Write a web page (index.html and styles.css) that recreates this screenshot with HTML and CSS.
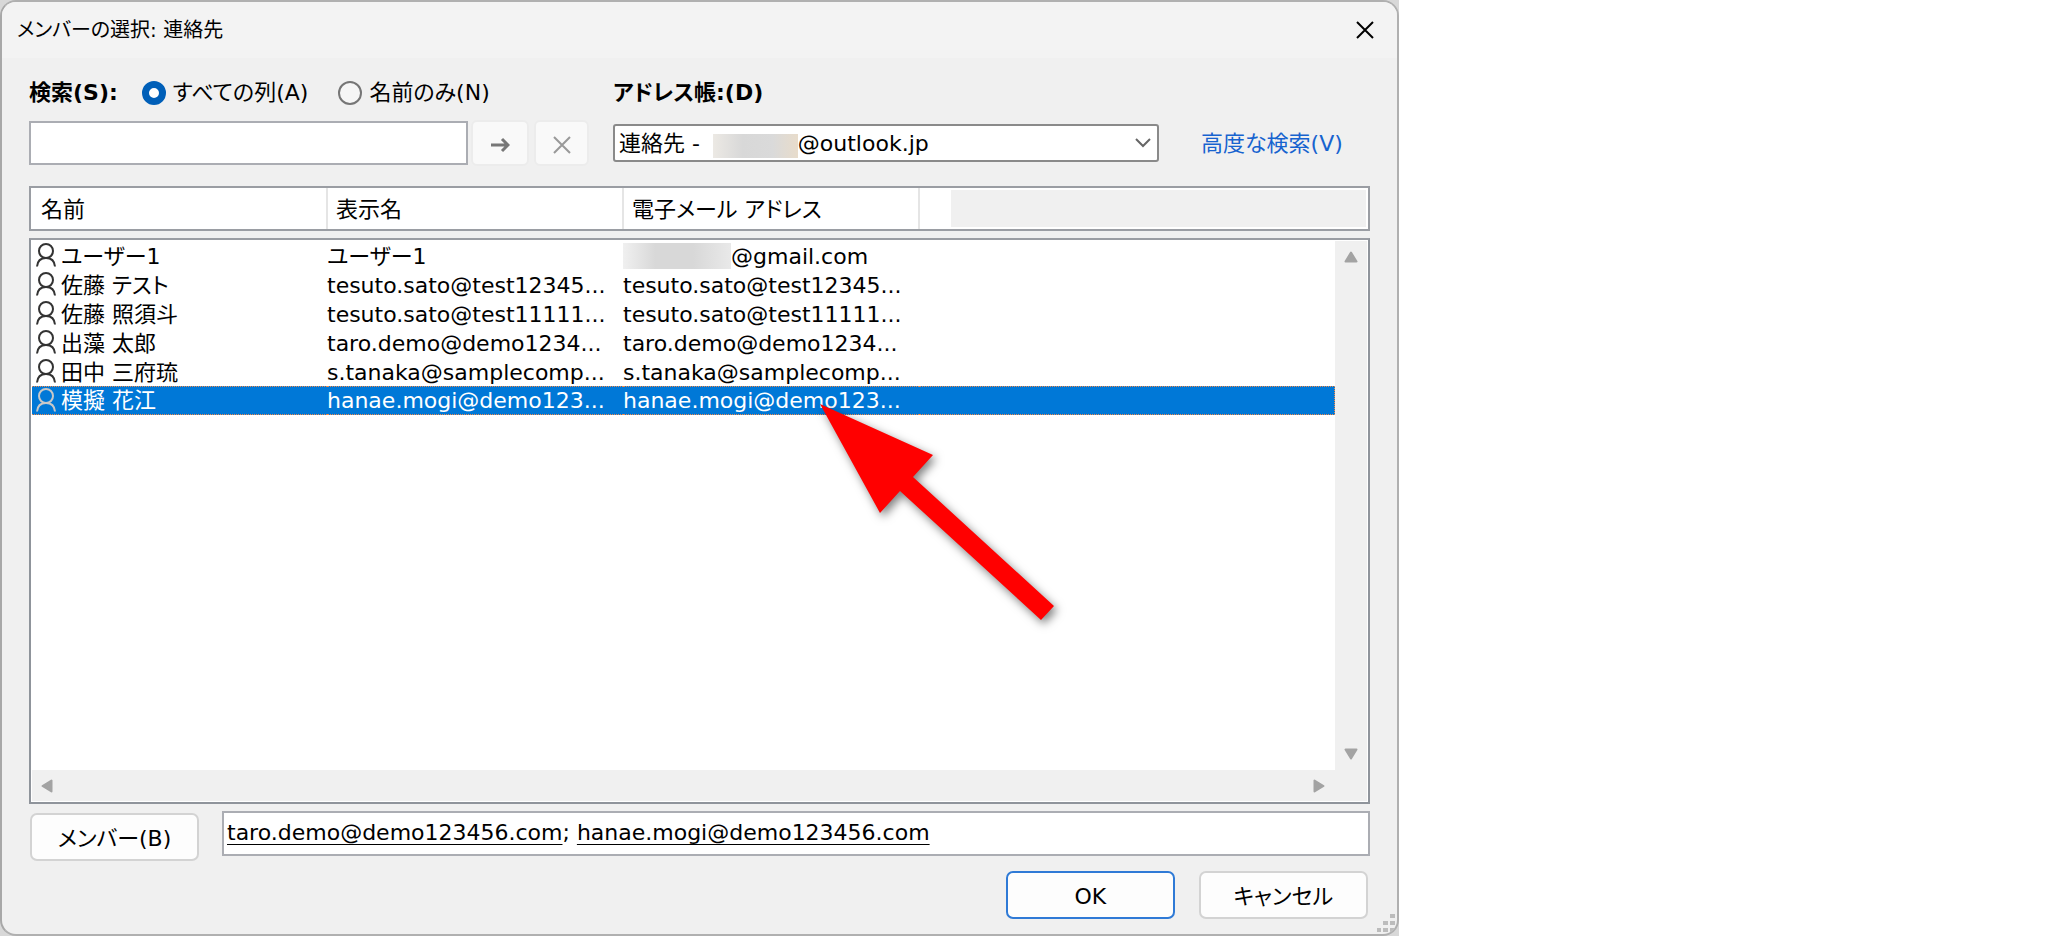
FILE: index.html
```html
<!DOCTYPE html>
<html lang="ja">
<head>
    <meta charset="UTF-8">
    <meta name="viewport" content="width=device-width, initial-scale=1.0">
    <title>メンバーの選択: 連絡先</title>
    <link rel="stylesheet" href="styles.css">
</head>
<body>
    <svg class="defs" aria-hidden="true">
        <symbol id="person" viewBox="0 0 20 24">
            <circle cx="10" cy="8" r="7"/>
            <path d="M1 23.5C1.500 18 5 15 10 15s8.500 3 9 8.500"/>
        </symbol>
    </svg>

    <div class="desktop">
        <div class="dialog" role="dialog" aria-labelledby="dialog-title">
            <div class="titlebar">
                <h1 id="dialog-title">メンバーの選択: 連絡先</h1>
                <button class="close" aria-label="閉じる">
                    <svg width="18" height="18" viewBox="0 0 18 18"><path d="M1 1l16 16M17 1L1 17"/></svg>
                </button>
            </div>

            <form class="content" onsubmit="return false">
                <div class="search">
                    <div class="search-left">
                        <div class="options">
                            <label class="caption" for="query">検索(S):</label>
                            <label class="radio"><input type="radio" name="scope" checked>すべての列(A)</label>
                            <label class="radio"><input type="radio" name="scope">名前のみ(N)</label>
                        </div>
                        <div class="query-row">
                            <input type="text" class="query" id="query">
                            <button class="tool tool-go" aria-label="検索" disabled>
                                <svg width="20" height="16" viewBox="0 0 20 16"><path d="M1 8h17M12 2l6 6-6 6"/></svg>
                            </button>
                            <button class="tool tool-clear" aria-label="クリア" disabled>
                                <svg width="18" height="18" viewBox="0 0 18 18"><path d="M1 1l16 16M17 1L1 17"/></svg>
                            </button>
                        </div>
                    </div>
                    <div class="search-right">
                        <label class="caption" for="book">アドレス帳:(D)</label>
                        <div class="book-row">
                            <div class="book-wrap">
                                <select class="book" id="book">
                                    <option>連絡先 - &nbsp;&nbsp;&nbsp;&nbsp;&nbsp;&nbsp;&nbsp;&nbsp;&nbsp;&nbsp;&nbsp;&nbsp;&nbsp;@outlook.jp</option>
                                </select>
                                <span class="mask book-mask"></span>
                                <svg class="chevron" width="16" height="10" viewBox="0 0 16 10"><path d="M1 1l7 7 7-7"/></svg>
                            </div>
                            <a href="#" class="advanced">高度な検索(V)</a>
                        </div>
                    </div>
                </div>

                <table class="columns">
                    <colgroup>
                        <col class="col-name">
                        <col class="col-text">
                        <col class="col-text">
                        <col class="col-stub">
                        <col>
                    </colgroup>
                    <tr>
                        <th>名前</th>
                        <th>表示名</th>
                        <th>電子メール アドレス</th>
                        <td></td>
                        <td class="unused"></td>
                    </tr>
                </table>

                <div class="list">
                    <div class="list-view">
                        <table class="contacts">
                            <tr>
                                <td><svg class="person"><use href="#person"/></svg>ユーザー1</td>
                                <td>ユーザー1</td>
                                <td><span class="mask name-mask"></span>@gmail.com</td>
                                <td></td>
                            </tr>
                            <tr>
                                <td><svg class="person"><use href="#person"/></svg>佐藤 テスト</td>
                                <td>tesuto.sato@test12345...</td>
                                <td>tesuto.sato@test12345...</td>
                                <td></td>
                            </tr>
                            <tr>
                                <td><svg class="person"><use href="#person"/></svg>佐藤 照須斗</td>
                                <td>tesuto.sato@test11111...</td>
                                <td>tesuto.sato@test11111...</td>
                                <td></td>
                            </tr>
                            <tr>
                                <td><svg class="person"><use href="#person"/></svg>出藻 太郎</td>
                                <td>taro.demo@demo1234...</td>
                                <td>taro.demo@demo1234...</td>
                                <td></td>
                            </tr>
                            <tr>
                                <td><svg class="person"><use href="#person"/></svg>田中 三府琉</td>
                                <td>s.tanaka@samplecomp...</td>
                                <td>s.tanaka@samplecomp...</td>
                                <td></td>
                            </tr>
                            <tr class="selected">
                                <td><svg class="person"><use href="#person"/></svg>模擬 花江</td>
                                <td>hanae.mogi@demo123...</td>
                                <td>hanae.mogi@demo123...</td>
                                <td></td>
                            </tr>
                        </table>
                    </div>
                    <div class="scroll scroll-v">
                        <svg width="14" height="12" viewBox="0 0 14 12"><path d="M7 1.500L12.500 10.500h-11z"/></svg>
                        <svg width="14" height="12" viewBox="0 0 14 12"><path d="M7 10.500L1.500 1.500h11z"/></svg>
                    </div>
                    <div class="scroll scroll-h">
                        <svg width="12" height="14" viewBox="0 0 12 14"><path d="M1.500 7L10.500 1.500v11z"/></svg>
                        <svg width="12" height="14" viewBox="0 0 12 14"><path d="M10.500 7L1.500 1.500v11z"/></svg>
                    </div>
                    <svg class="pointer" width="240" height="220" viewBox="0 0 240 220">
                        <path d="M0 0L113 51 93 73 234 202 221 216 80 87 60 109z"/>
                    </svg>
                </div>

                <div class="members">
                    <button class="btn">メンバー(B)</button>
                    <div class="member-field" role="textbox" contenteditable="true" spellcheck="false" aria-label="メンバー"><u>taro.demo@demo123456.com</u>; <u>hanae.mogi@demo123456.com</u></div>
                </div>

                <div class="actions">
                    <button class="btn btn-default">OK</button>
                    <button class="btn">キャンセル</button>
                </div>
            </form>

            <svg class="grip" width="18" height="18" viewBox="0 0 18 18">
                <path d="M13 0h5v4h-5zM6 7h5v4H6zM13 7h5v4h-5zM0 14h4v4H0zM6 14h5v4H6zM13 14h5v4h-5z"/>
            </svg>
        </div>
    </div>
</body>
</html>
```

FILE: styles.css
```css
* {
    margin: 0;
    padding: 0;
    box-sizing: border-box;
}

body {
    background: #fff;
    color: #000;
    font-family: "DejaVu Sans", "Noto Sans CJK JP", sans-serif;
    font-size: 22px;
    line-height: 28px;
    font-feature-settings: "palt";
}

button,
input,
select {
    font: inherit;
    font-feature-settings: inherit;
    color: inherit;
}

svg {
    fill: none;
    stroke: currentColor;
}

.defs {
    position: absolute;
    width: 0;
    height: 0;
}

.desktop {
    width: 68.3%;
    min-height: 100vh;
    display: flex;
    background: #d8d8d8;
}

.dialog {
    position: relative;
    flex: 1;
    display: flex;
    flex-direction: column;
    background: #f0f0f0;
    border: 2px solid #b0b0b0;
    border-left-color: #a8a8a8;
    border-radius: 16px;
    overflow: hidden;
}

.titlebar {
    display: flex;
    justify-content: space-between;
    align-items: center;
    height: 56px;
    padding: 0 17px 0 15px;
    background: #f3f3f3;
}

.titlebar h1 {
    font-size: 20px;
    font-weight: normal;
}

.close {
    display: flex;
    padding: 6px;
    border: none;
    background: none;
    stroke-width: 2;
}

.content {
    flex: 1;
    display: flex;
    flex-direction: column;
    padding: 21px 27px 15px 27px;
}

/* 検索 */
.search {
    display: flex;
    gap: 24px;
    margin-bottom: 20px;
}

.search-right {
    flex: 1;
}

.caption {
    font-weight: bold;
}

.options {
    display: flex;
    align-items: center;
    margin-bottom: 13px;
}

.radio {
    display: flex;
    align-items: center;
    gap: 7px;
    margin-left: 24px;
}

.radio + .radio {
    margin-left: 30px;
}

.radio input {
    appearance: none;
    width: 24px;
    height: 24px;
    border: 2px solid #767676;
    border-radius: 50%;
    background: #f6f6f6;
}

.radio input:checked {
    border: 7px solid #005fb8;
    background: #fff;
}

.query-row {
    display: flex;
    height: 46px;
}

.query {
    width: 439px;
    height: 44px;
    margin-top: 1px;
    border: 2px solid #abadb3;
    background: #fff;
}

.tool {
    display: flex;
    align-items: center;
    justify-content: center;
    padding-top: 4px;
    border: 2px solid #ececec;
    border-radius: 6px;
    background: #f9f9f9;
}

.tool-go {
    width: 58px;
    margin: 0 5px 0 3px;
    color: #777;
    stroke-width: 3;
}

.tool-clear {
    width: 55px;
    color: #999;
    stroke-width: 2;
}

.book-row {
    display: flex;
    align-items: center;
    gap: 42px;
    margin-top: 17px;
}

.book-wrap {
    position: relative;
    width: 546px;
}

.book {
    appearance: none;
    display: block;
    width: 100%;
    height: 38px;
    padding: 2px 0 0 4px;
    border: 2px solid #8a8a8a;
    border-radius: 3px;
    background: #fff;
}

.mask {
    background: linear-gradient(90deg, #f0f0f0, #d8d8d8 30%, #d8d8d8 65%, #e9e9e9);
}

.book-mask {
    position: absolute;
    left: 100px;
    top: 10px;
    width: 85px;
    height: 24px;
    background: linear-gradient(90deg, #ece9e4, #d8d8d8 35%, #dadada 70%, #e8dccb);
}

.chevron {
    position: absolute;
    right: 8px;
    top: 14px;
    color: #666;
    stroke-width: 2;
}

.advanced {
    padding-top: 2px;
    color: #1763cf;
    text-decoration: none;
}

/* 列見出し */
.columns,
.contacts {
    width: 100%;
    table-layout: fixed;
    border-spacing: 0;
}

.columns {
    height: 45px;
    margin-bottom: 7px;
    border: 2px solid #9a9da3;
    background: #fff;
}

.col-name {
    width: 297px;
}

.col-text {
    width: 296px;
}

.col-stub {
    width: 31px;
}

.columns th {
    padding: 2px 0 0 8px;
    border-right: 2px solid #e5e5e5;
    font-weight: normal;
    text-align: left;
}

.columns th:first-child {
    padding-left: 10px;
}

.columns .unused {
    background: #f0f0f0;
    border: 2px solid #fff;
    border-left: none;
}

/* 一覧 */
.list {
    position: relative;
    flex: 1;
    display: grid;
    grid-template: 1fr 31px / 1fr 32px;
    border: 2px solid #8f949b;
    border-top-color: #9a9da3;
    background: #fff;
    padding: 1px;
}

.contacts td {
    width: 296px;
    height: 29px;
    padding: 2px 0 0;
    line-height: 27px;
    white-space: nowrap;
}

.contacts td:last-child {
    width: auto;
}

.contacts td:first-child {
    width: 295px;
    padding-left: 4px;
}

.person {
    width: 20px;
    height: 24px;
    margin-right: 5px;
    vertical-align: top;
    color: #333;
    stroke-width: 2;
}

.name-mask {
    display: inline-block;
    width: 108px;
    height: 26px;
    vertical-align: top;
}

.selected td {
    padding-top: 1px;
    line-height: 26px;
    background: #0078d7;
    color: #fff;
    border-top: 1px dotted #f08a4b;
    border-bottom: 1px dotted #f08a4b;
}

.selected td:last-child {
    border-right: 1px dotted #f08a4b;
}

.selected .person {
    color: #c8c8c8;
}

.scroll {
    display: flex;
    justify-content: space-between;
    align-items: center;
    background: #f0f0f0;
}

.scroll svg {
    fill: #a3a3a3;
    stroke: #a3a3a3;
    stroke-width: 2;
    stroke-linejoin: round;
}

.scroll-v {
    flex-direction: column;
    padding: 10px 0;
}

.scroll-h {
    grid-column: 1 / 3;
    padding: 0 42px 0 9px;
}

.pointer {
    position: absolute;
    left: 789px;
    top: 164px;
    overflow: visible;
    fill: #f00;
    stroke: none;
    filter: drop-shadow(3px 4px 5px rgba(0, 0, 0, 0.5));
}

/* 下部 */
.members {
    display: flex;
    gap: 23px;
    margin-top: 7px;
}

.btn {
    width: 169px;
    height: 48px;
    padding-top: 3px;
    border: 2px solid #d3d3d3;
    border-radius: 7px;
    background: #fdfdfd;
}

.members .btn {
    margin: 2px 0 0 1px;
}

.member-field {
    flex: 1;
    height: 45px;
    padding: 6px 3px;
    border: 2px solid #abadb3;
    background: #fff;
    white-space: nowrap;
    overflow: hidden;
}

.member-field u {
    text-decoration-thickness: 1px;
    text-underline-offset: 4px;
    text-decoration-skip-ink: none;
}

.actions {
    display: flex;
    justify-content: flex-end;
    gap: 24px;
    margin-top: 10px;
    padding-right: 2px;
}

.btn-default {
    border-color: #2f7ad6;
}

.grip {
    position: absolute;
    right: 2px;
    bottom: 2px;
    fill: #bcbcbc;
    stroke: none;
}
```
